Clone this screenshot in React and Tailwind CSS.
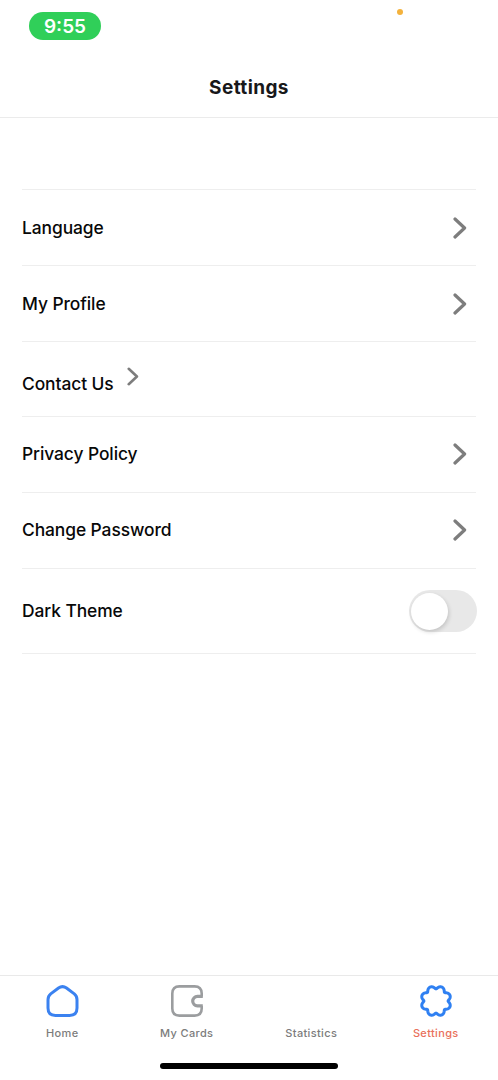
const rows = [
  { label: 'Language', height: 'h-[76px]' },
  { label: 'My Profile', height: 'h-[76px]' },
  { label: 'Contact Us', height: 'h-[75px]', inline: true },
  { label: 'Privacy Policy', height: 'h-[76px] pb-px' },
  { label: 'Change Password', height: 'h-[76px] pb-px' },
];

// Closed outline of an eight-lobed badge centred in a 36-unit box.
const badgePath =
  Array.from({ length: 160 }, (_, i) => {
    const a = (i / 160) * Math.PI * 2;
    const t = a - 0.05 * Math.sin(8 * a);
    const r = 13.6 - 1.5 * Math.cos(8 * a);
    return `${i ? 'L' : 'M'}${(18 + r * Math.cos(t)).toFixed(2)} ${(18 + r * Math.sin(t)).toFixed(2)}`;
  }).join('') + 'Z';

function Chevron({ className, strokeWidth }) {
  return (
    <svg viewBox="0 0 14 22" className={className} fill="none" stroke="#7d7d7d" strokeWidth={strokeWidth} strokeLinecap="round" strokeLinejoin="round">
      <path d="M2 2 L11.6 11 L2 20" />
    </svg>
  );
}

function HomeIcon() {
  return (
    <svg viewBox="0 0 36 36" className="size-9" fill="none" stroke="#3b82f0" strokeWidth="3" strokeLinejoin="round">
      <path d="M14.5 5 L6.7 10.9 Q4 13.1 4 16.7 V25 Q4 32.4 11.4 32.4 H25.6 Q33 32.4 33 25 V16.7 Q33 13.1 30.3 10.9 L22.5 5 Q18.5 2.2 14.5 5Z" />
    </svg>
  );
}

function WalletIcon() {
  return (
    <svg viewBox="0 0 36 36" className="size-9" fill="none" stroke="#9b9d9f" strokeWidth="2.6">
      <path d="M32.7 13.4 V10.5 Q32.7 3.4 25.6 3.4 H10.4 Q3.3 3.4 3.3 10.5 V25.5 Q3.3 32.6 10.4 32.6 H25.6 Q32.7 32.6 32.7 25.5 V22.9" />
      <path strokeWidth="3.2" d="M33.8 13.4 H28.4 A4.7 4.7 0 0 0 28.4 22.8 H33.8" />
    </svg>
  );
}

function BadgeIcon() {
  return (
    <svg viewBox="0 0 36 36" className="size-9" fill="none" stroke="#2f80f2" strokeWidth="3" strokeLinejoin="round">
      <path d={badgePath} />
    </svg>
  );
}

const tabs = [
  { label: 'Home', Icon: HomeIcon },
  { label: 'My Cards', Icon: WalletIcon },
  { label: 'Statistics' },
  { label: 'Settings', Icon: BadgeIcon, active: true },
];

export default function App() {
  return (
    <div className="flex h-[1080px] w-[498px] flex-col bg-white font-['Inter','Liberation_Sans',sans-serif] text-[#080808]">
      <div className="flex h-[58px] shrink-0 items-start justify-between pl-[29px] pr-[95px]">
        <div className="mt-3 flex h-7 w-[72px] items-center justify-center rounded-full bg-[#30cf59] pt-[2px] text-[19px] font-semibold text-white">9:55</div>
        <div className="mt-[9px] size-[6px] rounded-full bg-[#f4b23c]" />
      </div>
      <header className="flex h-[60px] shrink-0 items-center justify-center border-b border-[#ebebeb] pt-[2px] text-[19px] font-bold tracking-[0.4px] text-[#18181a]">
        <h1>Settings</h1>
      </header>
      <main className="grow px-[22px] pt-[71px]">
        <ul className="border-t border-[#eeeeee] text-[17.4px] font-medium leading-6 tracking-[-0.08px]">
          {rows.map(({ label, height, inline }) => (
            <li key={label} className={`flex border-b border-[#eeeeee] ${height} ${inline ? 'items-start pt-[25px]' : 'items-center justify-between pr-[9px]'}`}>
              <span className={inline ? 'pt-[5px]' : ''}>{label}</span>
              {inline ? <Chevron className="ml-[13px] h-[19px] w-3" strokeWidth={3} /> : <Chevron className="h-[22px] w-[14px]" strokeWidth={3.2} />}
            </li>
          ))}
          <li className="flex h-[85px] items-center justify-between border-b border-[#eeeeee]">
            <span>Dark Theme</span>
            <button type="button" role="switch" aria-checked="false" aria-label="Dark Theme" className="-mr-px flex h-[42px] w-[68px] items-center rounded-full bg-[#e8e8e8] pl-[2px]">
              <span className="size-[37px] rounded-full bg-white shadow-[1px_2px_4px_rgba(0,0,0,0.16)]" />
            </button>
          </li>
        </ul>
      </main>
      <nav className="grid h-[105px] shrink-0 grid-cols-4 grid-rows-[84px_1fr] border-t border-[#e9e9e9]">
        {tabs.map(({ label, Icon, active }) => (
          <div key={label} className={`flex flex-col items-center pt-[7px] text-[11px] font-medium leading-4 tracking-[0.35px] ${active ? 'text-[#e9705b]' : 'text-[#7c7c7c]'}`}>
            <div className="size-9">{Icon && <Icon />}</div>
            <span className="mt-[6px]">{label}</span>
          </div>
        ))}
        <div className="col-span-4 mt-[3px] h-[6px] w-[178px] justify-self-center rounded-full bg-black" />
      </nav>
    </div>
  );
}
